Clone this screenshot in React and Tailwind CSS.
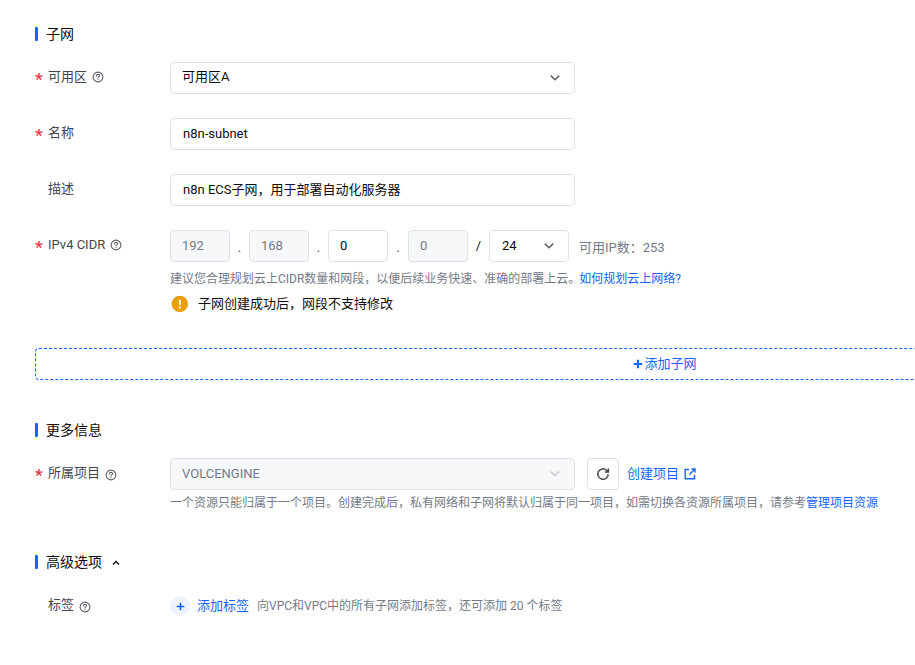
import React from "react";

const Help = ({ className = "" }) => (
  <svg viewBox="0 0 12 12" className={`w-[12px] h-[12px] shrink-0 ${className}`} fill="none" stroke="#5c6068" strokeWidth="1.1">
    <circle cx="6" cy="6" r="4.9" />
    <path d="M4.4 4.9c0-.9.7-1.5 1.6-1.5s1.6.6 1.6 1.4c0 1.1-1.6 1.1-1.6 2.2" strokeLinecap="round" />
    <circle cx="6" cy="8.7" r=".6" fill="#5c6068" stroke="none" />
  </svg>
);

const Chevron = ({ color = "#5c6068" }) => (
  <svg viewBox="0 0 12 12" className="w-[12px] h-[12px]" fill="none" stroke={color} strokeWidth="1.5">
    <path d="M1.8 3.6L6 7.8l4.2-4.2" />
  </svg>
);

const Section = ({ children, extra }) => (
  <div className="flex items-center h-[14px] gap-2">
    <div className="w-[3px] h-[14px] bg-[#1664ff] rounded-[1px]" />
    <div className="text-[14px] text-[#0c0d0e] leading-[14px]">{children}</div>
    {extra}
  </div>
);

const Label = ({ required, help, helpClass, children }) => (
  <div className="w-[135px] h-[32px] pb-[2px] flex items-center shrink-0 text-[13px] text-[#42464e]">
    <span className="w-[13px] text-[#e63f3f] text-[17px] font-bold leading-none pt-[5px] shrink-0">{required ? "*" : ""}</span>
    <span>{children}</span>
    {help && <Help className={`ml-[5px] ${helpClass || ""}`} />}
  </div>
);

const Box = ({ children, className = "" }) => (
  <div className={`h-[32px] border border-[#dde2e9] rounded-[4px] flex items-center text-[13px] text-[#0c0d0e] ${className}`}>{children}</div>
);

const Octet = ({ v, disabled }) => (
  <div className={`w-[60px] h-[32px] border border-[#dde2e9] rounded-[4px] pl-[11px] flex items-center text-[13px] ${disabled ? "bg-[#f6f8fa] text-[#737a87]" : "text-[#0c0d0e]"}`}>{v}</div>
);

const Dot = ({ w = "w-[19px]" }) => <div className={`${w} text-center text-[13px] text-[#42464e] pt-[4px]`}>.</div>;

export default function App() {
  return (
    <div className="w-[915px] h-[665px] overflow-hidden bg-white pl-[35px] pt-[27px] font-['Roboto','Noto_Sans_CJK_SC',sans-serif]">
      <Section>子网</Section>

      <div className="flex mt-[21px]">
        <Label required help>可用区</Label>
        <Box className="w-[405px] px-[11px] justify-between">
          <span className="pb-[2px]">可用区A</span>
          <span className="mr-[2px]"><Chevron /></span>
        </Box>
      </div>

      <div className="flex mt-[24px]">
        <Label required>名称</Label>
        <Box className="w-[405px] px-[12px]">n8n-subnet</Box>
      </div>

      <div className="flex mt-[24px]">
        <Label>描述</Label>
        <Box className="w-[405px] px-[12px]">n8n ECS子网，用于部署自动化服务器</Box>
      </div>

      <div className="flex mt-[24px]">
        <Label required help>IPv4 CIDR</Label>
        <div>
          <div className="flex items-center">
            <Octet v="192" disabled />
            <Dot />
            <Octet v="168" disabled />
            <Dot />
            <Octet v="0" />
            <Dot w="w-[20px]" />
            <Octet v="0" disabled />
            <div className="w-[21px] text-center text-[13px] text-[#0c0d0e]">/</div>
            <Box className="w-[80px] pl-[12px] pr-[13px] justify-between">
              <span>24</span>
              <Chevron />
            </Box>
            <div className="ml-[10px] text-[13px] text-[#737a87] pt-[3px]">可用IP数：253</div>
          </div>
          <div className="mt-[8px] h-[18px] leading-[18px] text-[12px] text-[#737a87]">
            建议您合理规划云上CIDR数量和网段，以便后续业务快速、准确的部署上云。<span className="text-[#1664ff] -ml-[1px]">如何规划云上网络?</span>
          </div>
          <div className="flex items-center mt-[7px] h-[18px] text-[13px] text-[#0c0d0e]">
            <svg viewBox="0 0 18 18" className="w-[18px] h-[18px] ml-[1px] mr-[9px] shrink-0">
              <circle cx="8.8" cy="9" r="8.2" fill="#eb9e05" />
              <rect x="7.9" y="4.6" width="1.8" height="5.8" rx=".9" fill="#fff" />
              <circle cx="8.8" cy="12.6" r="1.05" fill="#fff" />
            </svg>
            子网创建成功后，网段不支持修改
          </div>
        </div>
      </div>

      <div className="w-[1260px] h-[32px] mt-[35px] border border-dashed border-[#1664ff] rounded-[4px] flex items-center justify-center text-[13px] text-[#1664ff]">
        <svg viewBox="0 0 10 10" className="w-[10px] h-[10px] mr-[1px]" fill="none" stroke="#1664ff" strokeWidth="2">
          <path d="M5 .8v8.4M.8 5h8.4" />
        </svg>
        添加子网
      </div>

      <div className="mt-[43px]"><Section>更多信息</Section></div>

      <div className="flex mt-[21px]">
        <Label required help helpClass="mt-[3px]">所属项目</Label>
        <div>
          <div className="flex items-center">
            <Box className="w-[405px] pl-[11px] pr-[13px] justify-between bg-[#f6f8fa] text-[#737a87]">
              <span>VOLCENGINE</span>
              <Chevron color="#c7ccd6" />
            </Box>
            <div className="ml-[12px] w-[32px] h-[32px] border border-[#dde2e9] rounded-[4px] flex items-center justify-center">
              <svg viewBox="0 0 14 14" className="w-[14px] h-[14px]" fill="none" stroke="#42464e" strokeWidth="1.5">
                <path d="M12.2 7.2a5.2 5.2 0 1 1-1.6-3.9L12 4.6" />
                <path d="M12.4 1.4v3.7H8.8" />
              </svg>
            </div>
            <div className="ml-[8px] text-[13px] text-[#1664ff]">创建项目</div>
            <svg viewBox="0 0 12 12" className="w-[12px] h-[12px] ml-[5px]" fill="none" stroke="#1664ff" strokeWidth="1.4">
              <path d="M5 1.5H1.2v9.3h9.3V7" />
              <path d="M5.5 6.5L10.5 1.5M7.4 1h3.6v3.6" />
            </svg>
          </div>
          <div className="mt-[4px] h-[18px] leading-[18px] text-[12px] text-[#737a87] whitespace-nowrap">
            一个资源只能归属于一个项目。创建完成后，私有网络和子网将默认归属于同一项目，如需切换各资源所属项目，请参考<span className="text-[#1664ff]">管理项目资源</span>
          </div>
        </div>
      </div>

      <div className="mt-[43px]">
        <Section extra={
          <svg viewBox="0 0 8 8" className="w-[8px] h-[8px] ml-[2px] mt-[2px]" fill="none" stroke="#0c0d0e" strokeWidth="1.4">
            <path d="M1 5.5L4 2.5l3 3" />
          </svg>
        }>高级选项</Section>
      </div>

      <div className="flex mt-[21px]">
        <Label help helpClass="mt-[3px]">标签</Label>
        <div className="flex items-center h-[32px] text-[13px]">
          <div className="w-[20px] h-[20px] rounded-full bg-[#eef4ff] flex items-center justify-center">
            <svg viewBox="0 0 10 10" className="w-[9px] h-[9px]" fill="none" stroke="#1664ff" strokeWidth="1.8">
              <path d="M5 .8v8.4M.8 5h8.4" />
            </svg>
          </div>
          <span className="ml-[7px] text-[#1664ff]">添加标签</span>
          <span className="ml-[8px] text-[12px] text-[#737a87]">向VPC和VPC中的所有子网添加标签，还可添加 20 个标签</span>
        </div>
      </div>
    </div>
  );
}
